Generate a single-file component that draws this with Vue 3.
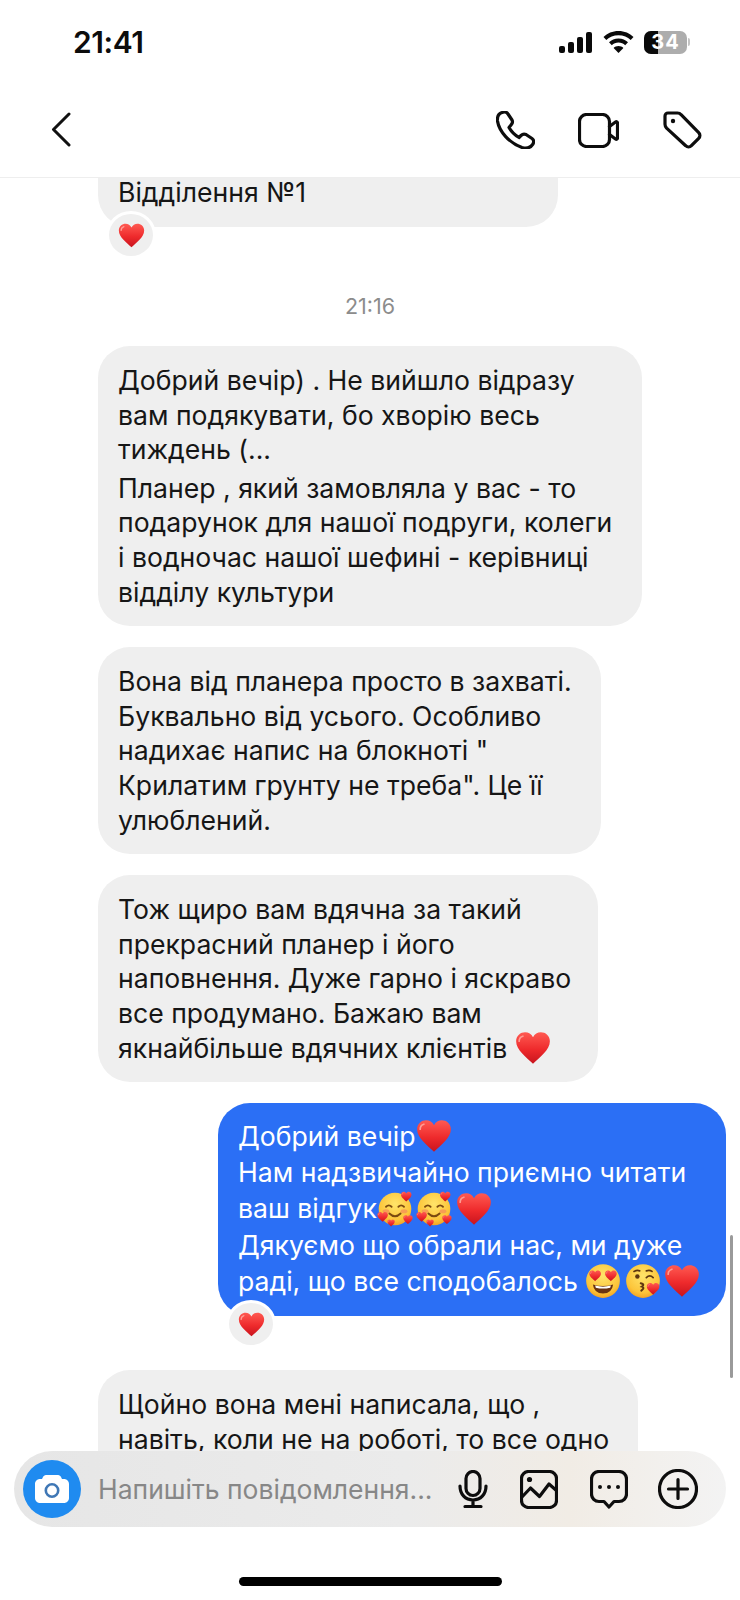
<script setup>
const messages = [
  {
    id: 'm0', width: 460, first: true, reaction: true,
    lines: [['Відділення №1']],
  },
  { id: 't', time: '21:16' },
  {
    id: 'm1', width: 544, paraAt: 3,
    lines: [
      ['Добрий вечір) . Не вийшло відразу'],
      ['вам подякувати, бо хворію весь'],
      ['тиждень (...'],
      ['Планер , який замовляла у вас - то'],
      ['подарунок для нашої подруги, колеги'],
      ['і водночас нашої шефині - керівниці'],
      ['відділу культури'],
    ],
  },
  {
    id: 'm2', width: 503,
    lines: [
      ['Вона від планера просто в захваті.'],
      ['Буквально від усього. Особливо'],
      ['надихає напис на блокноті "'],
      ['Крилатим грунту не треба". Це її'],
      ['улюблений.'],
    ],
  },
  {
    id: 'm3', width: 500,
    lines: [
      ['Тож щиро вам вдячна за такий'],
      ['прекрасний планер і його'],
      ['наповнення. Дуже гарно і яскраво'],
      ['все продумано. Бажаю вам'],
      ['якнайбільше вдячних клієнтів ', { e: 'heart' }],
    ],
  },
  {
    id: 'm4', width: 508, own: true, reaction: true,
    lines: [
      ['Добрий вечір', { e: 'heart' }],
      ['Нам надзвичайно приємно читати'],
      ['ваш відгук', { e: 'hearts-face' }, { e: 'hearts-face' }, { e: 'heart' }],
      ['Дякуємо що обрали нас, ми дуже'],
      ['раді, що все сподобалось ', { e: 'heart-eyes' }, { e: 'kiss' }, { e: 'heart' }],
    ],
  },
  {
    id: 'm5', width: 540, clipped: true,
    lines: [
      ['Щойно вона мені написала, що ,'],
      ['навіть, коли не на роботі, то все одно'],
    ],
  },
]
</script>

<template>
  <div class="page">
    <!-- shared emoji drawings -->
    <svg class="defs" width="0" height="0" aria-hidden="true">
      <defs>
        <linearGradient id="heartFill" x1="0" y1="0" x2="0" y2="1">
          <stop offset="0" stop-color="#ff5a52" />
          <stop offset="0.55" stop-color="#ee2a2c" />
          <stop offset="1" stop-color="#c8141e" />
        </linearGradient>
        <radialGradient id="faceFill" cx="0.5" cy="0.35" r="0.7">
          <stop offset="0" stop-color="#ffe46a" />
          <stop offset="0.7" stop-color="#fcc53a" />
          <stop offset="1" stop-color="#f09a1e" />
        </radialGradient>
        <symbol id="heart" viewBox="0 0 32 32">
          <path d="M16 30C10 24 1 18 1 10 1 5 5 2 9 2c3 0 5.600 1.600 7 4.400C17.400 3.600 20 2 23 2c4 0 8 3 8 8 0 8-9 14-15 20z" fill="url(#heartFill)" />
          <path d="M7 5.500c-2 .6-3.300 2.400-3.300 4.500" fill="none" stroke="#ff9c94" stroke-width="1.500" stroke-linecap="round" />
        </symbol>
        <symbol id="hearts-face" viewBox="0 0 32 32">
          <circle cx="16" cy="16" r="14.500" fill="url(#faceFill)" />
          <path d="M8 14q2.500-2.500 5 0M19 14q2.500-2.500 5 0" fill="none" stroke="#7a4a10" stroke-width="1.600" stroke-linecap="round" />
          <path d="M11 20q5 5 10 0" fill="none" stroke="#7a4a10" stroke-width="1.600" stroke-linecap="round" />
          <ellipse cx="8" cy="18" rx="3" ry="1.800" fill="#f58a5a" opacity="0.7" />
          <ellipse cx="24" cy="18" rx="3" ry="1.800" fill="#f58a5a" opacity="0.7" />
          <use href="#heart" x="21" y="0" width="10" height="10" />
          <use href="#heart" x="0" y="18" width="10" height="10" />
          <use href="#heart" x="23" y="21" width="9" height="9" />
          <use href="#heart" x="9" y="25" width="7" height="7" />
        </symbol>
        <symbol id="heart-eyes" viewBox="0 0 32 32">
          <circle cx="16" cy="16" r="15" fill="url(#faceFill)" />
          <path d="M7 19q9 3 18 0-1 8-9 8t-9-8z" fill="#6b3410" />
          <path d="M9 20q7 2 14 0l-.6 2q-6.400 1.500-12.800 0z" fill="#fff" />
          <use href="#heart" x="3.500" y="6" width="11" height="11" />
          <use href="#heart" x="17.500" y="6" width="11" height="11" />
        </symbol>
        <symbol id="kiss" viewBox="0 0 32 32">
          <circle cx="16" cy="16" r="15" fill="url(#faceFill)" />
          <circle cx="11" cy="12" r="2" fill="#5e3610" />
          <path d="M19 13q3-3 6 0M8 7.500q3-1.500 5-.5M19 7q3-1 5 .5" fill="none" stroke="#5e3610" stroke-width="1.500" stroke-linecap="round" />
          <path d="M14 18q4 1 1 3q3 1-.5 3.500" fill="none" stroke="#5e3610" stroke-width="1.800" stroke-linecap="round" />
          <use href="#heart" x="19" y="17" width="12" height="12" />
        </symbol>
      </defs>
    </svg>

    <header class="top">
      <div class="status">
        <span class="clock">21:41</span>
        <div class="status-icons">
          <svg class="signal" width="34" height="21" viewBox="0 0 34 21">
            <rect x="0" y="14" width="6" height="7" rx="2" />
            <rect x="9" y="10" width="6" height="11" rx="2" />
            <rect x="18" y="5" width="6" height="16" rx="2" />
            <rect x="27" y="0" width="6" height="21" rx="2" />
          </svg>
          <svg class="wifi" width="31" height="22" viewBox="0 0 31 22">
            <path d="M15.500 0C9.500 0 4.300 2.300.5 6l2.800 3c3.100-3 7.300-4.800 12.200-4.800S24.600 6 27.700 9l2.800-3C26.700 2.300 21.500 0 15.500 0z" />
            <path d="M15.500 7.500c-3.800 0-7 1.400-9.500 3.700l2.800 3c1.800-1.600 4.100-2.600 6.700-2.600s4.900 1 6.700 2.600l2.800-3c-2.500-2.300-5.700-3.700-9.500-3.700z" />
            <path d="M15.500 15c-2 0-3.600.7-4.900 1.900l4.900 5.100 4.900-5.100C19.100 15.700 17.500 15 15.500 15z" />
          </svg>
          <div class="battery">
            <div class="battery-body">
              <div class="battery-fill"></div>
              <span class="battery-num">34</span>
            </div>
            <div class="battery-nub"></div>
          </div>
        </div>
      </div>
      <nav class="nav">
        <svg class="back" width="20" height="35" viewBox="0 0 20 35">
          <path d="M18 2 2.500 17.500 18 33" />
        </svg>
        <div class="nav-actions">
          <svg class="line-icon phone" width="39" height="38" viewBox="0 0 39 38">
            <path d="M6 1.500C3 2.500 1 5 1.500 10 3 20 13 32 26 36.500c5 1.500 9-.5 11-3.500 1-2 1-4-1-5.500l-6-4c-2-1-3.500-.5-5 1L23 26.500c-5-3-8-6.500-10-10l2-2.500c1.500-1.500 2-3 1-5l-4-6C10.500 1 8 .5 6 1.500z" />
          </svg>
          <svg class="line-icon" width="41" height="35" viewBox="0 0 41 35">
            <rect x="1.500" y="1.500" width="30" height="32" rx="7" />
            <path d="M31.500 13.500 37.500 9c1-.7 2-.1 2 1v15c0 1.100-1 1.700-2 1l-6-4.500" />
          </svg>
          <svg class="line-icon" width="39" height="38" viewBox="0 0 39 38">
            <path d="M5 2h9.500c1.400 0 2.700.6 3.600 1.700l17.600 18c1.600 1.600 1.600 4.100 0 5.700l-7.300 7.300c-1.600 1.600-4.100 1.600-5.700 0L3.600 17.100C2.600 16 2 14.700 2 13.300V5c0-1.700 1.300-3 3-3z" />
            <circle class="solid" cx="10" cy="10" r="2.200" />
          </svg>
        </div>
      </nav>
    </header>

    <main class="chat">
      <template v-for="m in messages" :key="m.id">
        <div v-if="m.time" class="stamp">{{ m.time }}</div>
        <div
          v-else
          class="bubble"
          :class="{ own: m.own, first: m.first, clipped: m.clipped, 'has-reaction': m.reaction }"
          :style="{ width: m.width + 'px' }"
        >
          <div
            v-for="(line, i) in m.lines"
            :key="i"
            class="line"
            :class="{ para: m.paraAt === i }"
          >
            <template v-for="(part, j) in line" :key="j">
              <span v-if="typeof part === 'string'">{{ part }}</span>
              <svg v-else class="emoji" viewBox="0 0 32 32"><use :href="'#' + part.e" /></svg>
            </template>
          </div>
          <div v-if="m.reaction" class="reaction">
            <svg class="reaction-heart" viewBox="0 0 32 32"><use href="#heart" /></svg>
          </div>
        </div>
      </template>
      <div class="scrollbar"></div>
    </main>

    <!-- message composer, sits over the chat -->
    <div class="composer">
      <div class="camera">
        <svg width="34" height="28" viewBox="0 0 34 28">
          <path d="M11 0h12c1.500 0 2.500 1 3 2l1 2h2c2.800 0 5 2.200 5 5v14c0 2.800-2.200 5-5 5H5c-2.800 0-5-2.200-5-5V9c0-2.800 2.200-5 5-5h2l1-2c.5-1 1.500-2 3-2z" fill="#fff" />
          <circle cx="17" cy="15.500" r="6.200" fill="none" stroke="#3f77b5" stroke-width="2.600" />
        </svg>
      </div>
      <span class="placeholder">Напишіть повідомлення...</span>
      <div class="composer-icons">
        <svg class="mic" width="30" height="38" viewBox="0 0 30 38">
          <rect x="8" y="1.500" width="14" height="24" rx="7" />
          <path d="M2 16c0 8.500 5.500 14 13 14s13-5.500 13-14M15 30v6M7 36.500h16" />
        </svg>
        <svg class="pic" width="38" height="39" viewBox="0 0 38 39">
          <rect x="1.500" y="1.500" width="35" height="36" rx="7" />
          <path d="M2 27l8.500-9 9 8.500 9.500-12.500 8 7" />
          <circle class="solid" cx="9.500" cy="9.500" r="2.600" />
        </svg>
        <svg class="bubble-icon" width="38" height="39" viewBox="0 0 38 39">
          <path d="M9 1.500h20c4.200 0 7.500 3.300 7.500 7.500v15c0 4.200-3.300 7.500-7.500 7.500h-5L19 37l-5-5.500H9c-4.200 0-7.500-3.300-7.500-7.500V9C1.500 4.800 4.800 1.500 9 1.500z" />
          <circle class="solid" cx="10" cy="17" r="2" />
          <circle class="solid" cx="19" cy="17" r="2" />
          <circle class="solid" cx="28" cy="17" r="2" />
        </svg>
        <svg width="40" height="40" viewBox="0 0 40 40">
          <circle cx="20" cy="20" r="18.500" />
          <path d="M20 10.500v19M10.500 20h19" />
        </svg>
      </div>
    </div>

    <footer class="foot">
      <div class="home-bar"></div>
    </footer>
  </div>
</template>

<style scoped>
.page {
  position: relative;
  width: 740px;
  height: 1600px;
  display: flex;
  flex-direction: column;
  overflow: hidden;
  background: #fff;
  font-family: Inter, "Liberation Sans", sans-serif;
  color: #161616;
}

.defs { position: absolute; }

/* ── Top ── */
.top {
  flex-shrink: 0;
  height: 178px;
  border-bottom: 1px solid #eeeeee;
  box-sizing: border-box;
}

.status {
  height: 88px;
  padding: 0 50px 4px 73px;
  box-sizing: border-box;
  display: flex;
  align-items: center;
  justify-content: space-between;
}

.clock {
  font-size: 30px;
  font-weight: 600;
  letter-spacing: -0.4px;
  color: #0c0c0c;
}

.status-icons {
  display: flex;
  align-items: center;
  gap: 10px;
}

.signal, .wifi { fill: #0a0a0a; }

.battery {
  display: flex;
  align-items: center;
  gap: 1px;
}

.battery-body {
  position: relative;
  width: 43px;
  height: 23px;
  border-radius: 7px;
  overflow: hidden;
  background: #adadad;
  display: flex;
  align-items: center;
  justify-content: center;
}

.battery-fill {
  position: absolute;
  left: 0;
  top: 0;
  bottom: 0;
  width: 14px;
  background: #0a0a0a;
}

.battery-num {
  position: relative;
  color: #fff;
  font-size: 20px;
  font-weight: 700;
  letter-spacing: 1px;
}

.battery-nub {
  width: 2px;
  height: 8px;
  border-radius: 0 2px 2px 0;
  background: #c4c4c4;
}

.nav {
  height: 89px;
  padding: 6px 38px 0 51px;
  box-sizing: border-box;
  display: flex;
  align-items: flex-start;
  justify-content: space-between;
}

.back {
  margin-top: 18px;
  fill: none;
  stroke: #111;
  stroke-width: 3;
  stroke-linecap: round;
  stroke-linejoin: round;
}

.nav-actions {
  display: flex;
  align-items: center;
  gap: 44px;
  margin-top: 17px;
}

.phone { margin-right: -1px; }

.line-icon,
.composer-icons svg {
  display: block;
  fill: none;
  stroke: #0d0d0d;
  stroke-width: 3.2;
  stroke-linecap: round;
  stroke-linejoin: round;
}

.line-icon .solid,
.composer-icons .solid {
  fill: #0d0d0d;
  stroke: none;
}

/* ── Chat ── */
.chat {
  position: relative;
  flex: 1;
  min-height: 0;
  overflow: hidden;
  padding: 0 14px 0 98px;
  display: flex;
  flex-direction: column;
  align-items: flex-start;
  gap: 21px;
}

.bubble {
  position: relative;
  flex-shrink: 0;
  box-sizing: border-box;
  padding: 17px 20px;
  border-radius: 32px;
  background: #efefef;
  font-size: 26.6px;
  line-height: 34.6px;
  white-space: nowrap;
}

/* scrolled under the header, so its top edge is flat */
.bubble.first {
  padding: 0 20px 21px;
  line-height: 28px;
  border-radius: 0 0 32px 32px;
}

.bubble.clipped { padding-bottom: 60px; }

.bubble.own {
  align-self: flex-end;
  padding: 15px 20px 17px;
  display: flex;
  flex-direction: column;
  gap: 1px;
  background: #2b6ff5;
  color: #fff;
}

.bubble.has-reaction { margin-bottom: 33px; }

.line {
  display: flex;
  align-items: center;
}

.line.para { margin-top: 4px; }

.line span { white-space: pre; }

.emoji {
  width: 36px;
  height: 36px;
  flex-shrink: 0;
}

.bubble:not(.own) .emoji { margin: -1px 0; }

.emoji + .emoji { margin-left: 3.500px; }

.reaction {
  position: absolute;
  left: 8px;
  bottom: -32px;
  width: 44px;
  height: 42px;
  border: 3px solid #fff;
  border-radius: 50%;
  background: #efefef;
  display: flex;
  align-items: center;
  justify-content: center;
}

.reaction-heart {
  width: 27px;
  height: 27px;
}

.stamp {
  align-self: center;
  margin: 13px 0 7px -84px;
  font-size: 21.500px;
  line-height: 24px;
  color: #8c8c8c;
}

.scrollbar {
  position: absolute;
  right: 7px;
  top: 1057px;
  width: 3px;
  height: 143px;
  border-radius: 2px;
  background: #9a9a9a;
}

/* ── Composer ── */
.composer {
  position: absolute;
  left: 14px;
  right: 14px;
  top: 1451px;
  height: 76px;
  padding: 0 28px 0 9px;
  box-sizing: border-box;
  display: flex;
  align-items: center;
  border-radius: 38px;
  background: linear-gradient(90deg, #e6e6e6 0%, #ebebeb 55%, #f1ece5 78%, #f3f3f3 100%);
}

.camera {
  width: 58px;
  height: 58px;
  flex-shrink: 0;
  border-radius: 50%;
  background: #1f8bf0;
  display: flex;
  align-items: center;
  justify-content: center;
}

.placeholder {
  flex: 1;
  margin-left: 17px;
  font-size: 26.500px;
  color: #878787;
  white-space: nowrap;
}

.composer-icons {
  display: flex;
  align-items: center;
}

.mic { margin-right: 32px; }
.pic { margin-right: 32px; }
.bubble-icon { margin-right: 30px; }

/* ── Bottom ── */
.foot {
  flex-shrink: 0;
  height: 73px;
  background: #fff;
  display: flex;
  justify-content: center;
  padding-top: 50px;
  box-sizing: border-box;
}

.home-bar {
  width: 263px;
  height: 9px;
  border-radius: 5px;
  background: #000;
}
</style>
